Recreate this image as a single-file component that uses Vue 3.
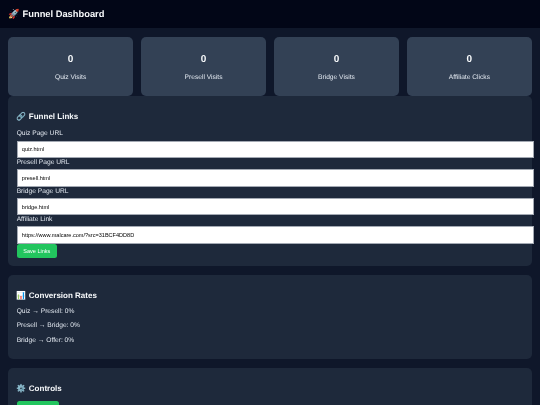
<script setup>
const stats = [
  { value: 0, label: 'Quiz Visits' },
  { value: 0, label: 'Presell Visits' },
  { value: 0, label: 'Bridge Visits' },
  { value: 0, label: 'Affiliate Clicks' },
]

const links = [
  { label: 'Quiz Page URL', value: 'quiz.html' },
  { label: 'Presell Page URL', value: 'presell.html' },
  { label: 'Bridge Page URL', value: 'bridge.html' },
  { label: 'Affiliate Link', value: 'https://www.malcare.com/?src=31BCF4DD8D' },
]

const rates = ['Quiz → Presell: 0%', 'Presell → Bridge: 0%', 'Bridge → Offer: 0%']
</script>

<template>
  <div class="page">
    <header class="topbar">🚀 Funnel Dashboard</header>

    <main class="content">
      <div class="stats">
        <div v-for="s in stats" :key="s.label" class="stat">
          <div class="stat-value">{{ s.value }}</div>
          <div class="stat-label">{{ s.label }}</div>
        </div>
      </div>

      <section class="panel links">
        <h3>🔗 Funnel Links</h3>
        <template v-for="l in links" :key="l.label">
          <label>{{ l.label }}</label>
          <input type="text" :value="l.value" />
        </template>
        <button class="btn">Save Links</button>
      </section>

      <section class="panel rates">
        <h3>📊 Conversion Rates</h3>
        <p v-for="r in rates" :key="r">{{ r }}</p>
      </section>

      <section class="panel controls">
        <h3>⚙️ Controls</h3>
        <button class="btn">Reset Stats</button>
      </section>
    </main>
  </div>
</template>

<style>
html, body {
  margin: 0;
  background: #0f172a;
  overflow: hidden;
}
</style>

<style scoped>
.page {
  height: 405px;
  overflow: hidden;
  background: #0f172a;
  color: #e2e8f0;
  font-family: "Liberation Sans", Arial, sans-serif;
  font-size: 6.67px;
  text-rendering: geometricPrecision;
  filter: blur(0.25px);
}
.topbar {
  height: 28.33px;
  box-sizing: border-box;
  padding: 0 8.33px;
  line-height: 28.33px;
  background: #020617;
  color: #f8fafc;
  font-size: 9.33px;
  font-weight: 700;
}
.content {
  padding: 8.33px;
}
.stats {
  display: grid;
  grid-template-columns: repeat(4, 1fr);
  gap: 8.33px;
}
.stat {
  height: 59.67px;
  box-sizing: border-box;
  padding-top: 17.5px;
  background: #334155;
  border-radius: 5px;
  text-align: center;
}
.stat-value {
  font-size: 10px;
  font-weight: 700;
  line-height: 11.5px;
  color: #f8fafc;
}
.stat-label {
  margin-top: 8.33px;
  line-height: 7.67px;
}
.panel {
  background: #1e293b;
  border-radius: 5px;
  padding: 8.33px;
  margin-bottom: 8.33px;
}
.panel h3 {
  margin: 6.67px 0;
  font-size: 8px;
  line-height: 11.7px;
  color: #f8fafc;
}
.links label {
  display: block;
  padding-top: 0.8px;
  line-height: 7.67px;
}
.links input {
  display: block;
  width: 100%;
  height: 15.6px;
  box-sizing: content-box;
  margin: 2.53px 0 0;
  padding: 0 4.17px;
  border: 1px solid #a3a9b3;
  background: #fff;
  color: #000;
  font: 5.55px "Liberation Sans", Arial, sans-serif;
  outline: none;
}
.btn {
  display: block;
  height: 14px;
  padding: 0 6.6px;
  border: none;
  border-radius: 2.5px;
  background: #22c55e;
  color: #fff;
  font: 400 5.55px "Liberation Sans", Arial, sans-serif;
  white-space: nowrap;
}
.rates p {
  margin: 6.67px 0;
  line-height: 7.67px;
}
</style>
